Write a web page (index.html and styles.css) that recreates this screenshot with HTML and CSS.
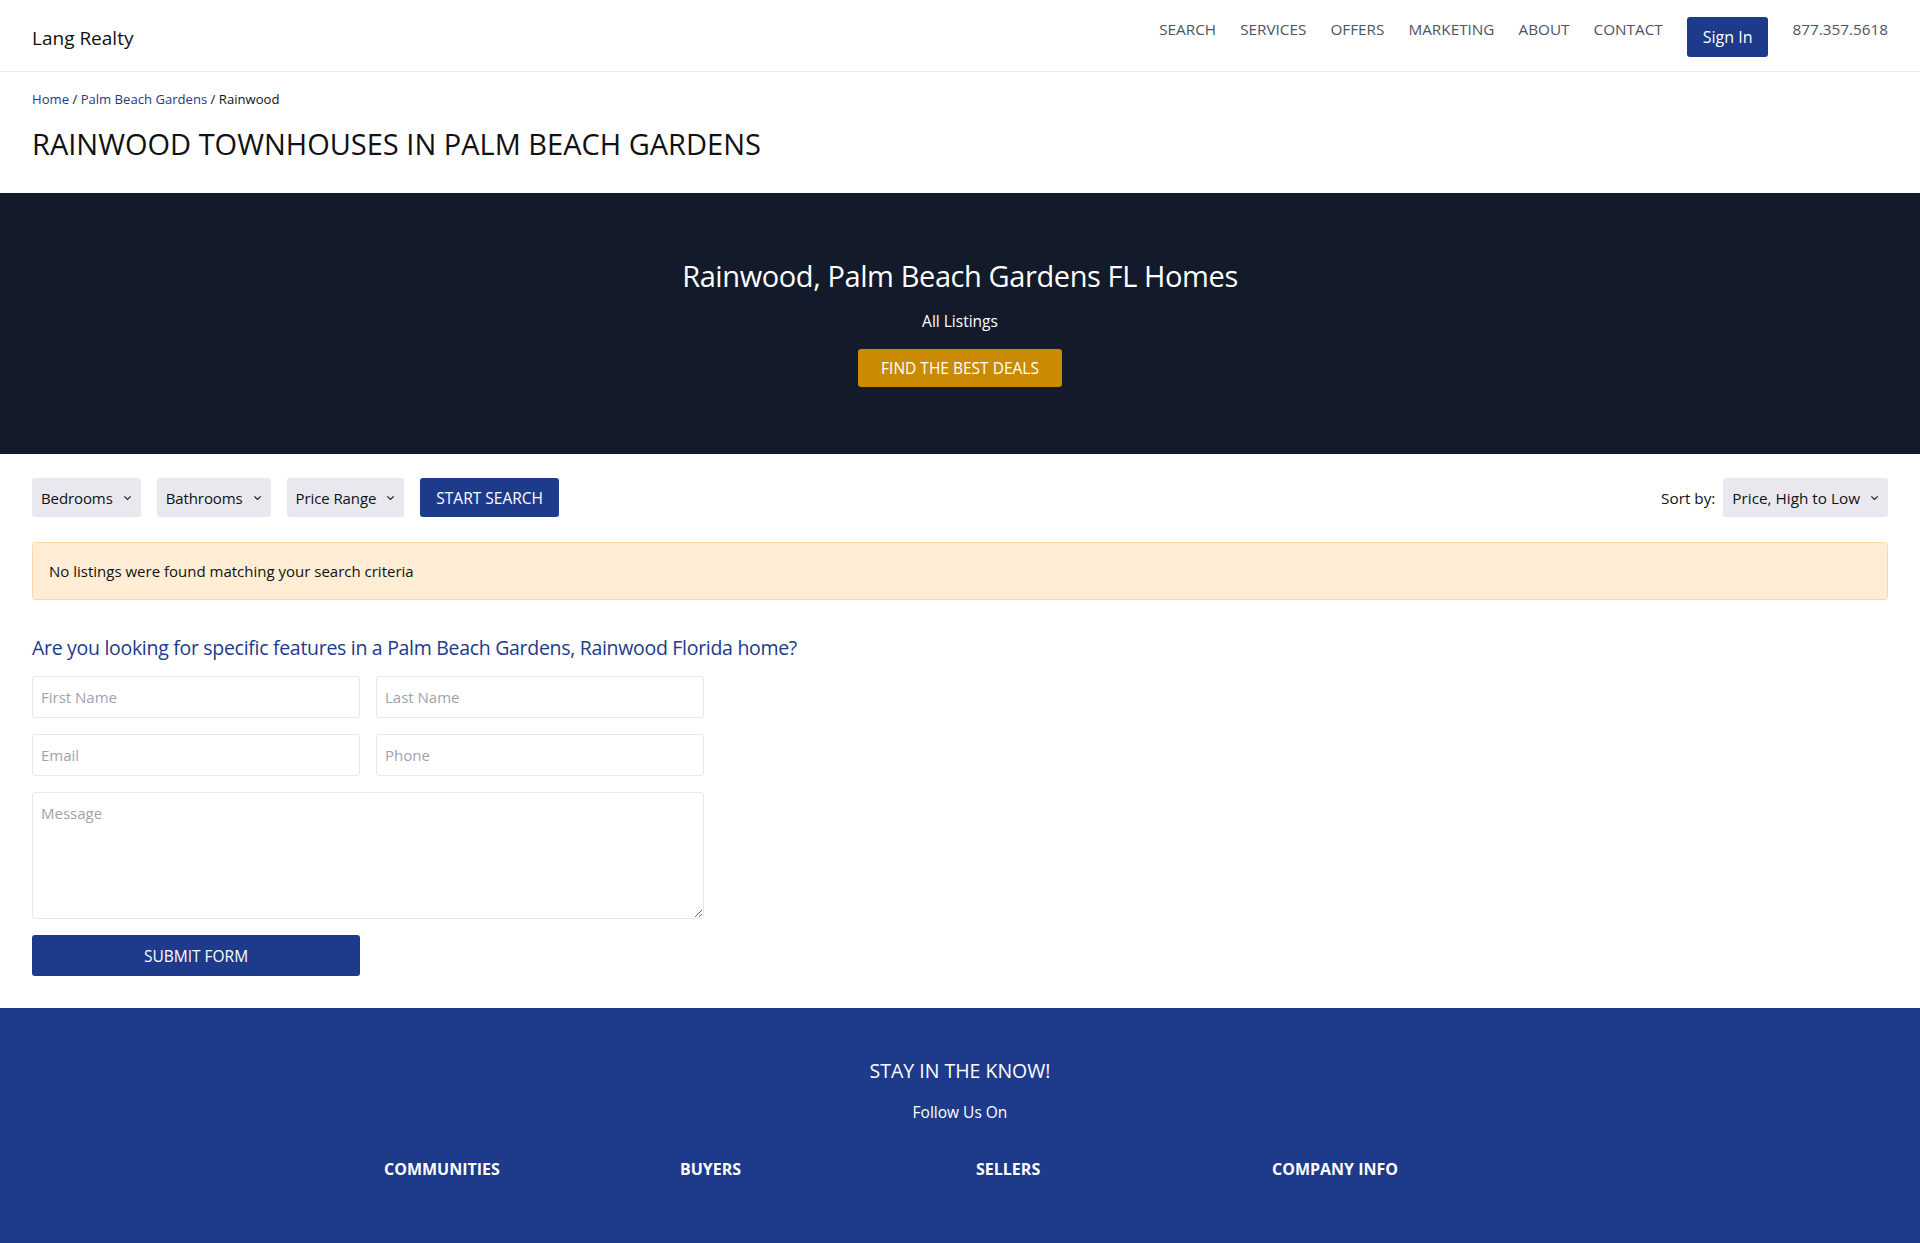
FILE: index.html
```html
<!DOCTYPE html>
<html lang="en">
<head>
<meta charset="utf-8">
<title>Rainwood Townhouses in Palm Beach Gardens</title>
<link rel="stylesheet" href="styles.css">
</head>
<body>
<header class="site-header">
  <a class="logo" href="#">Lang Realty</a>
  <nav class="main-nav">
    <a href="#">SEARCH</a>
    <a href="#">SERVICES</a>
    <a href="#">OFFERS</a>
    <a href="#">MARKETING</a>
    <a href="#">ABOUT</a>
    <a href="#">CONTACT</a>
    <a class="signin" href="#">Sign In</a>
    <a class="phone" href="#">877.357.5618</a>
  </nav>
</header>

<section class="page-title">
  <div class="breadcrumb"><a href="#">Home</a> / <a href="#">Palm Beach Gardens</a> / <span>Rainwood</span></div>
  <h1>RAINWOOD TOWNHOUSES IN PALM BEACH GARDENS</h1>
</section>

<section class="hero">
  <h2>Rainwood, Palm Beach Gardens FL Homes</h2>
  <p>All Listings</p>
  <a class="deals-btn" href="#">FIND THE BEST DEALS</a>
</section>

<main class="content">
  <div class="filters">
    <div class="filter-left">
      <div class="select">Bedrooms <svg viewBox="0 0 10 6" class="chev"><path d="M1.5 1.2 5 4.6 8.5 1.2" fill="none" stroke="#222" stroke-width="1.4"/></svg></div>
      <div class="select">Bathrooms <svg viewBox="0 0 10 6" class="chev"><path d="M1.5 1.2 5 4.6 8.5 1.2" fill="none" stroke="#222" stroke-width="1.4"/></svg></div>
      <div class="select">Price Range <svg viewBox="0 0 10 6" class="chev"><path d="M1.5 1.2 5 4.6 8.5 1.2" fill="none" stroke="#222" stroke-width="1.4"/></svg></div>
      <a class="search-btn" href="#">START SEARCH</a>
    </div>
    <div class="filter-right">
      <span class="sort-label">Sort by:</span>
      <div class="select">Price, High to Low <svg viewBox="0 0 10 6" class="chev"><path d="M1.5 1.2 5 4.6 8.5 1.2" fill="none" stroke="#222" stroke-width="1.4"/></svg></div>
    </div>
  </div>

  <div class="alert">No listings were found matching your search criteria</div>

  <h3 class="form-title">Are you looking for specific features in a Palm Beach Gardens, Rainwood Florida home?</h3>
  <form class="lead-form">
    <input type="text" placeholder="First Name">
    <input type="text" placeholder="Last Name">
    <input type="email" placeholder="Email">
    <input type="tel" placeholder="Phone">
    <textarea class="message" placeholder="Message"></textarea>
    <button type="button" class="submit-btn">SUBMIT FORM</button>
  </form>
</main>

<footer class="site-footer">
  <h4>STAY IN THE KNOW!</h4>
  <p>Follow Us On</p>
  <div class="footer-cols">
    <div class="col-title">COMMUNITIES</div>
    <div class="col-title">BUYERS</div>
    <div class="col-title">SELLERS</div>
    <div class="col-title">COMPANY INFO</div>
  </div>
</footer>
</body>
</html>
```

FILE: styles.css
```css
* { box-sizing: border-box; }
html, body { margin: 0; padding: 0; }
body {
  font-family: "Open Sans", "Noto Sans", sans-serif;
  color: #111;
  background: #fff;
  min-height: 1243px;
  display: flex;
  flex-direction: column;
}
a { text-decoration: none; color: inherit; }

.site-header {
  height: 72px;
  border-bottom: 1px solid #e5e7eb;
  display: flex;
  align-items: center;
  justify-content: space-between;
  padding: 0 32px;
}
.logo { font-size: 19px; color: #111; margin-top: 4px; }
.main-nav {
  display: flex;
  align-items: center;
  gap: 24px;
  align-self: stretch;
  font-size: 15.3px;
  color: #4b5563;
}
.main-nav a { margin-top: -13px; }
.main-nav a.signin {
  margin-top: 2px;
  background: #1e3a8a;
  color: #fff;
  border-radius: 3px;
  height: 40px;
  padding: 0 16px;
  display: flex;
  align-items: center;
  font-size: 16px;
}

.page-title { padding: 18px 32px 29px; }
.breadcrumb { font-size: 13.1px; color: #111; }
.breadcrumb a { color: #1e3a8a; }
.page-title h1 {
  margin: 16px 0 0;
  font-size: 29px;
  font-weight: 400;
  line-height: 40px;
}

.hero {
  background: #131a2a;
  color: #fff;
  height: 261px;
  display: flex;
  flex-direction: column;
  align-items: center;
  padding-top: 63px;
}
.hero h2 {
  margin: 0;
  font-size: 29px;
  font-weight: 400;
  line-height: 40px;
  letter-spacing: -0.4px;
}
.hero p { margin: 13px 0 0; font-size: 15.5px; line-height: 24px; }
.deals-btn {
  margin-top: 16px;
  background: #ca8a04;
  color: #fff;
  height: 38px;
  width: 204px;
  border-radius: 3px;
  display: flex;
  align-items: center;
  justify-content: center;
  font-size: 15.5px;
}

.content { padding: 24px 32px 32px; }
.filters {
  display: flex;
  justify-content: space-between;
  align-items: center;
}
.filter-left, .filter-right { display: flex; align-items: center; gap: 16px; }
.filter-right { gap: 8px; }
.select {
  background: #e8e8ee;
  border-radius: 3px;
  height: 39px;
  padding: 0 9px;
  display: flex;
  align-items: center;
  gap: 10px;
  font-size: 15px;
  color: #111;
}
.filter-left .select { letter-spacing: -0.1px; }
.chev { width: 9px; height: 6px; }
.sort-label { font-size: 15.3px; }
.filter-right .select { font-size: 15.3px; }
.search-btn {
  background: #1e3a8a;
  color: #fff;
  border-radius: 3px;
  height: 39px;
  padding: 0 16px;
  display: flex;
  align-items: center;
  font-size: 15.5px;
}

.alert {
  margin-top: 25px;
  height: 58px;
  background: #ffedd5;
  border: 1px solid #fed7aa;
  border-radius: 3px;
  display: flex;
  align-items: center;
  padding: 0 16px;
  font-size: 15px;
}

.form-title {
  margin: 34px 0 0;
  font-size: 19.5px;
  font-weight: 400;
  color: #1e3a8a;
  letter-spacing: -0.3px;
  line-height: 28px;
}
.lead-form {
  margin-top: 14px;
  width: 672px;
  display: grid;
  grid-template-columns: 1fr 1fr;
  gap: 16px;
}
.lead-form input, .lead-form textarea {
  font-family: inherit;
  font-size: 15px;
  border: 1px solid #e5e7eb;
  border-radius: 3px;
  padding: 0 8px;
  height: 42px;
  color: #111;
  outline: none;
}
.lead-form ::placeholder { color: #9ca3af; }
.lead-form textarea.message {
  grid-column: 1 / 3;
  height: 127px;
  padding: 10px 8px;
}
.submit-btn {
  font-family: inherit;
  background: #1e3a8a;
  color: #fff;
  border: 0;
  border-radius: 3px;
  height: 41px;
  font-size: 15.5px;
}

.site-footer {
  flex: 1;
  background: #1e3a8a;
  color: #fff;
  text-align: center;
  padding-top: 50px;
}
.site-footer h4 {
  margin: 0;
  font-size: 19.5px;
  font-weight: 400;
  line-height: 26px;
}
.site-footer p { margin: 17px 0 0; font-size: 15.5px; line-height: 22px; }
.footer-cols {
  width: 1152px;
  margin: 35px auto 0;
  display: grid;
  grid-template-columns: repeat(4, 1fr);
  gap: 32px;
  text-align: left;
}
.col-title { font-size: 16px; font-weight: 700; }
```
